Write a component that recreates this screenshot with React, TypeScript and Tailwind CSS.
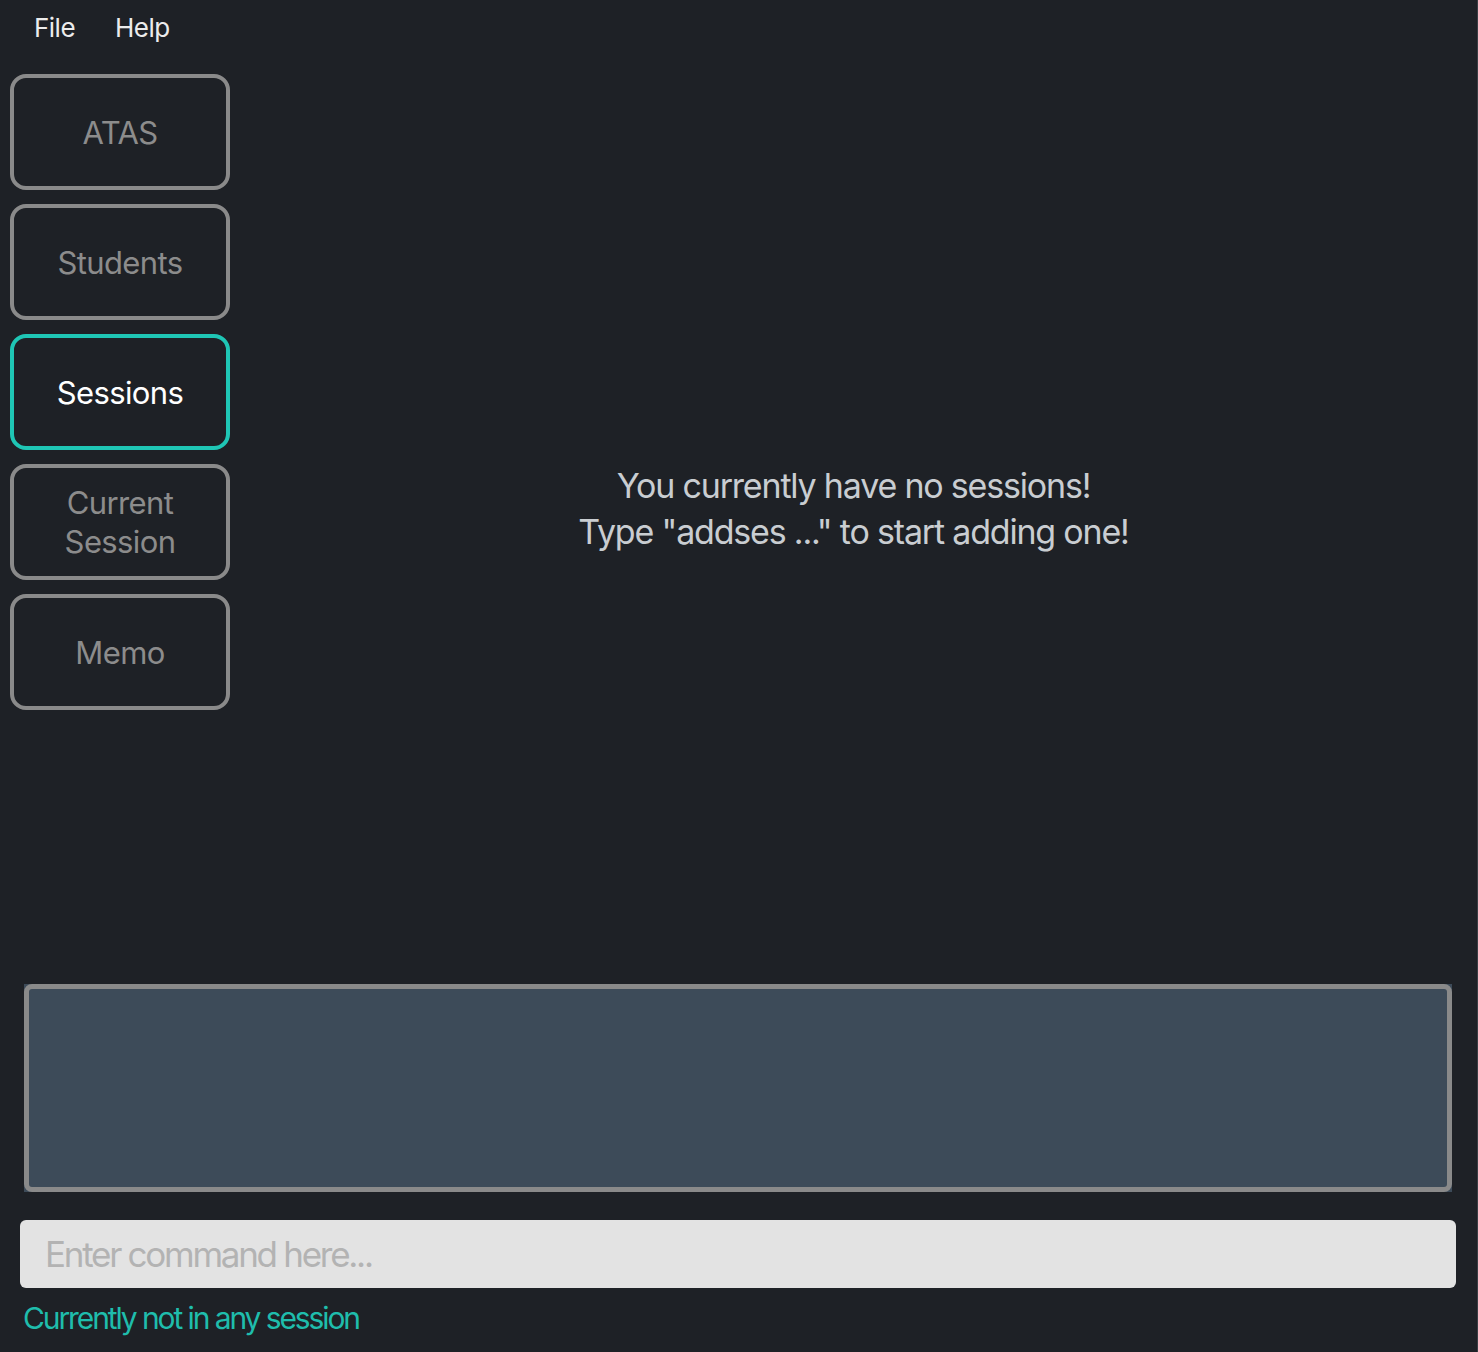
import React from "react";

const navItems: { label: string[]; active?: boolean }[] = [
  { label: ["ATAS"] },
  { label: ["Students"] },
  { label: ["Sessions"], active: true },
  { label: ["Current", "Session"] },
  { label: ["Memo"] },
];

export default function App() {
  return (
    <div
      className="w-[1478px] h-[1352px] bg-[#1e2126] flex flex-col overflow-hidden border-r border-[#3a3f45]"
      style={{ fontFamily: "Inter, 'Noto Sans', sans-serif" }}
    >
      {/* Menu bar */}
      <div className="h-[54px] flex items-center pl-[34px] gap-[40px] text-[26px] text-[#ececec] tracking-[-0.02em]">
        <span>File</span>
        <span>Help</span>
      </div>

      {/* Main row */}
      <div className="h-[910px] flex">
        <div className="w-[230px] pl-[10px] pt-[20px] flex flex-col gap-[14px]">
          {navItems.map((item) => (
            <div
              key={item.label.join(" ")}
              className={
                item.active
                  ? "h-[116px] w-[220px] rounded-[16px] border-[4px] border-[#1fc6b5] flex flex-col items-center justify-center text-[31px] leading-[39px] text-white tracking-[-0.02em]"
                  : "h-[116px] w-[220px] rounded-[16px] border-[4px] border-[#8a8a8a] flex flex-col items-center justify-center text-[31px] leading-[39px] text-[#8c8c8c] tracking-[-0.02em]"
              }
            >
              {item.label.map((l) => (
                <span key={l}>{l}</span>
              ))}
            </div>
          ))}
        </div>
        <div className="flex-1 flex flex-col items-center justify-center text-[34px] leading-[46px] text-[#c9cdd1] tracking-[-0.035em]">
          <span>You currently have no sessions!</span>
          <span>Type "addses ..." to start adding one!</span>
        </div>
      </div>

      {/* Result display */}
      <div className="mt-[20px] ml-[24px] w-[1428px] h-[208px] bg-[#3d4b59]">
        <div className="w-full h-full border-[5px] border-[#8a8a8a] rounded-[8px]" />
      </div>

      {/* Command box */}
      <div className="mt-[28px] ml-[20px] w-[1436px] h-[68px] bg-[#e3e3e3] rounded-[6px] flex items-center pl-[25px] text-[35px] text-[#b3b3b3] tracking-[-0.065em]">
        Enter command here...
      </div>

      {/* Status */}
      <div className="ml-[23px] mt-[10px] text-[30px] leading-[40px] text-[#1fbdac] tracking-[-0.07em]">
        Currently not in any session
      </div>
    </div>
  );
}
